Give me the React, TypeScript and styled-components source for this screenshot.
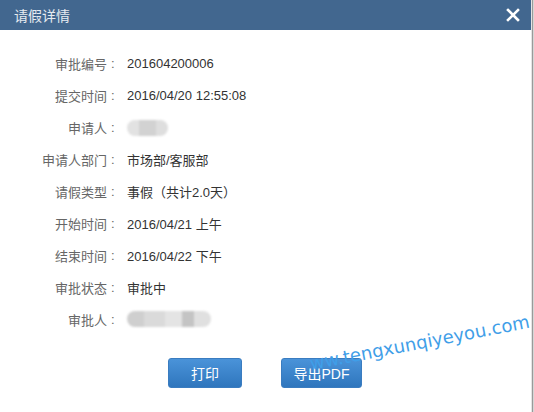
import React from 'react';
import styled, { createGlobalStyle } from 'styled-components';

const GlobalStyle = createGlobalStyle`
  html, body {
    margin: 0;
    padding: 0;
    background: #ffffff;
  }
  body {
    font-family: "Liberation Sans", "Noto Sans CJK SC", sans-serif;
  }
`;

const Frame = styled.div`
  width: 534px;
  height: 412px;
  display: flex;
  overflow: hidden;
`;

const Dialog = styled.div`
  position: relative;
  width: 531px;
  height: 412px;
  display: flex;
  flex-direction: column;
  background: #ffffff;
  overflow: hidden;
`;

const Edge = styled.div`
  width: 3px;
  height: 412px;
  background: linear-gradient(to right, #e4e4e4 0 1px, #9a9a9a 1px 2px, #d6d6d6 2px);
`;

const TitleBar = styled.div`
  height: 30px;
  display: flex;
  align-items: center;
  justify-content: space-between;
  padding: 0 10px 0 14px;
  background: #42678f;
`;

const Title = styled.span`
  color: #e6ebf1;
  font-size: 14px;
  font-family: "Noto Sans CJK SC", sans-serif;
`;

const Close = styled.button`
  width: 16px;
  height: 16px;
  padding: 0;
  border: none;
  background: transparent;
  display: flex;
  align-items: center;
  justify-content: center;
`;

const Body = styled.div`
  display: flex;
  flex-direction: column;
  padding-top: 18px;
`;

const Row = styled.div`
  height: 31.9px;
  display: flex;
  align-items: center;
  font-size: 13px;
`;

const Label = styled.span`
  width: 107px;
  text-align: right;
  color: #666666;
  font-family: "Noto Sans CJK SC", sans-serif;
`;

const Colon = styled.span`
  width: 16px;
  padding-left: 4px;
  color: #666666;
  font-family: "Liberation Sans", sans-serif;
`;

const Value = styled.span`
  color: #333333;
  font-family: "Liberation Sans", "Noto Sans CJK SC", sans-serif;
`;

const Blur = styled.span<{ $w: number }>`
  width: ${(p) => p.$w}px;
  height: 16px;
  border-radius: 8px;
  filter: blur(1.2px);
`;

const Actions = styled.div`
  display: flex;
  gap: 39px;
  padding: 23px 0 0 168px;
`;

const Button = styled.button<{ $w: number }>`
  width: ${(p) => p.$w}px;
  height: 30px;
  border: 1px solid #3a7cc0;
  border-radius: 3px;
  background: linear-gradient(#4a93d9, #2f76bd);
  color: #ffffff;
  font-size: 14px;
  font-family: "Liberation Sans", "Noto Sans CJK SC", sans-serif;
  padding: 0;
`;

const Watermark = styled.div`
  position: absolute;
  left: 312px;
  top: 353px;
  transform: rotate(-11deg);
  transform-origin: left bottom;
  font-family: "DejaVu Sans", sans-serif;
  font-size: 18px;
  color: #3f9ee8;
  white-space: nowrap;
  pointer-events: none;
`;

const rows: [string, string][] = [
  ['审批编号', '201604200006'],
  ['提交时间', '2016/04/20 12:55:08'],
  ['申请人', ''],
  ['申请人部门', '市场部/客服部'],
  ['请假类型', '事假（共计2.0天）'],
  ['开始时间', '2016/04/21 上午'],
  ['结束时间', '2016/04/22 下午'],
  ['审批状态', '审批中'],
  ['审批人', ''],
];

const blurs: Record<number, { w: number; bg: string }> = {
  2: {
    w: 41,
    bg: 'linear-gradient(to right, #e2e2e2 0 30%, #d2d2d2 30% 70%, #dedede 70%)',
  },
  8: {
    w: 84,
    bg: 'linear-gradient(to right, #cfcfcf 0 20%, #dadada 20% 45%, #e4e4e4 45% 65%, #c4c4c4 65% 80%, #e0e0e0 80%)',
  },
};

export default function App() {
  return (
    <>
      <GlobalStyle />
      <Frame>
        <Dialog>
          <TitleBar>
            <Title>请假详情</Title>
            <Close aria-label="关闭">
              <svg width="14" height="14" viewBox="0 0 14 14">
                <path d="M2 2 L12 12 M12 2 L2 12" stroke="#ffffff" strokeWidth="2.6" strokeLinecap="square" />
              </svg>
            </Close>
          </TitleBar>
          <Body>
            {rows.map(([label, value], i) => (
              <Row key={label}>
                <Label>{label}</Label>
                <Colon>:</Colon>
                {blurs[i] ? (
                  <Blur $w={blurs[i].w} style={{ background: blurs[i].bg }} />
                ) : (
                  <Value>{value}</Value>
                )}
              </Row>
            ))}
          </Body>
          <Actions>
            <Button $w={74}>打印</Button>
            <Button $w={81}>导出PDF</Button>
          </Actions>
          <Watermark>ww.tengxunqiyeyou.com</Watermark>
        </Dialog>
        <Edge />
      </Frame>
    </>
  );
}
